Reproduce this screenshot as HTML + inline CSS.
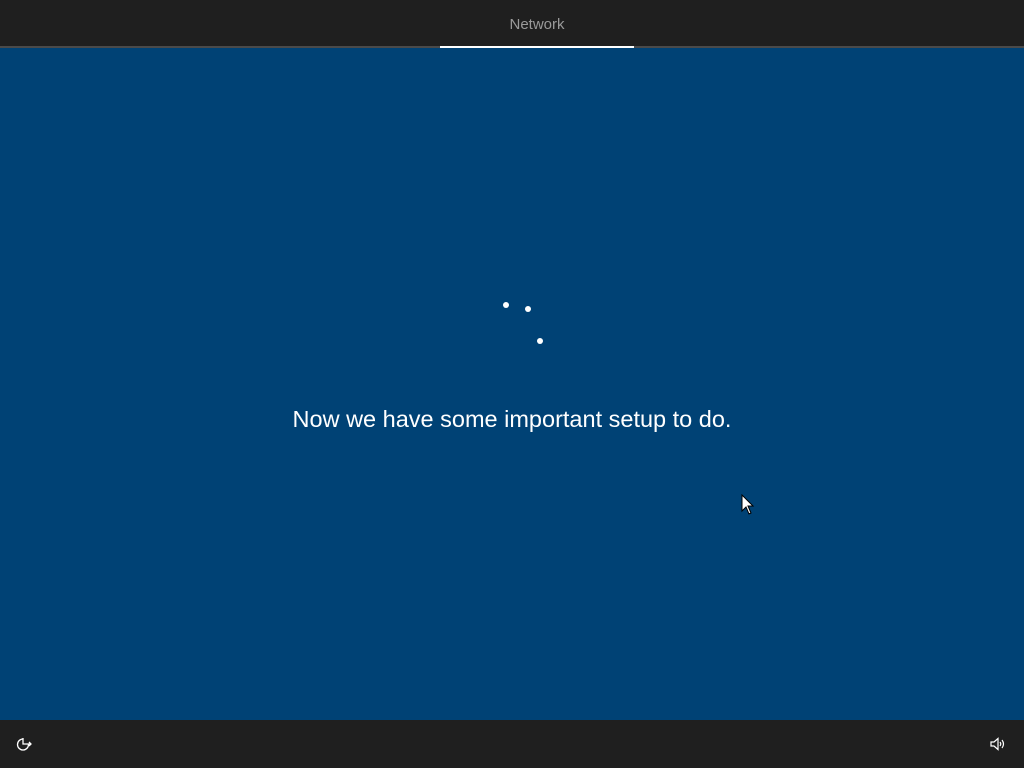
<!DOCTYPE html>
<html><head><style>
body{margin:0;width:1024px;height:768px;overflow:hidden;background:#004275;font-family:"Liberation Sans",sans-serif;position:relative}
.top{position:absolute;left:0;top:0;width:1024px;height:46px;background:#1f1f1f}
.line{position:absolute;left:0;top:46px;width:1024px;height:2px;background:#4a4a4a}
.tab{position:absolute;left:440px;top:46px;width:194px;height:2px;background:#fff}
.net{position:absolute;left:440px;width:194px;top:16px;text-align:center;color:#9a9a9a;font-size:15px}
.bot{position:absolute;left:0;top:720px;width:1024px;height:48px;background:#1f1f1f}
.dot{position:absolute;width:6px;height:6px;border-radius:50%;background:#fff}
.msg{position:absolute;left:0;width:1024px;top:406px;text-align:center;color:#fff;font-size:23.5px}
</style></head><body>
<div class="top"><div class="net">Network</div></div>
<div class="line"></div><div class="tab"></div>
<div class="dot" style="left:503px;top:302px"></div>
<div class="dot" style="left:525px;top:306px"></div>
<div class="dot" style="left:537px;top:338px"></div>
<div class="msg">Now we have some important setup to do.</div>
<svg style="position:absolute;left:741px;top:494px" width="14" height="22" viewBox="0 0 14 22"><path d="M1 1 L1 17 L5 13 L8 20 L10 19 L7 12 L12 12 Z" fill="#fff" stroke="#000" stroke-width="1"/></svg>
<div class="bot">
<svg style="position:absolute;left:15px;top:16px" width="18" height="16" viewBox="0 0 18 16" fill="none" stroke="#fff" stroke-width="1.3"><path d="M8 3 A5.5 5.5 0 1 0 13.5 8.5"/><path d="M8 2 V8 H16 M14 6 L16 8 L14 10"/></svg>
<svg style="position:absolute;left:990px;top:17px" width="16" height="14" viewBox="0 0 16 14" fill="none" stroke="#fff" stroke-width="1.2"><path d="M1 5 H4 L8 1.5 V12.5 L4 9 H1 Z"/><path d="M10 5 Q11.5 7 10 9"/><path d="M12 3 Q15 7 12 11"/></svg>
</div>
</body></html>
